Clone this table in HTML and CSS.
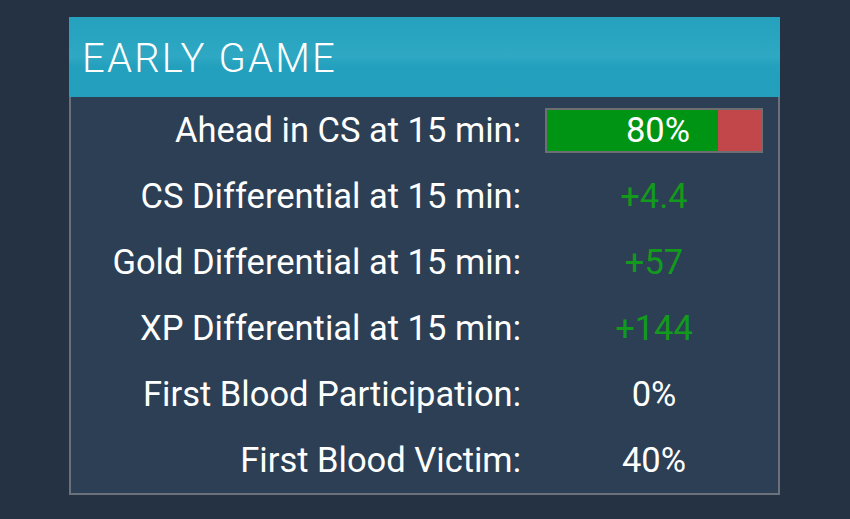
FILE: index.html
```html
<!DOCTYPE html>
<html>
<head>
<meta charset="utf-8">
<link rel="stylesheet" href="styles.css">
</head>
<body>
<div class="panel">
  <div class="panel-header">EARLY GAME</div>
  <div class="panel-body">
    <div class="row">
      <div class="label">Ahead in CS at 15 min:</div>
      <div class="value">
        <div class="bar">
          <div class="bar-win" style="width:80%"></div>
          <div class="bar-loss"></div>
          <span class="bar-text">80%</span>
        </div>
      </div>
    </div>
    <div class="row">
      <div class="label">CS Differential at 15 min:</div>
      <div class="value positive">+4.4</div>
    </div>
    <div class="row">
      <div class="label">Gold Differential at 15 min:</div>
      <div class="value positive">+57</div>
    </div>
    <div class="row">
      <div class="label">XP Differential at 15 min:</div>
      <div class="value positive">+144</div>
    </div>
    <div class="row">
      <div class="label">First Blood Participation:</div>
      <div class="value">0%</div>
    </div>
    <div class="row">
      <div class="label">First Blood Victim:</div>
      <div class="value">40%</div>
    </div>
  </div>
</div>
</body>
</html>
```

FILE: styles.css
```css
html, body {
  margin: 0;
  padding: 0;
}
body {
  background: #243244;
  width: 850px;
  height: 519px;
  overflow: hidden;
  font-family: Roboto, "Liberation Sans", sans-serif;
  color: #ffffff;
}
.panel {
  margin: 17px 0 0 69px;
  width: 711px;
}
.panel-header {
  height: 80px;
  box-sizing: border-box;
  background: linear-gradient(to bottom, #25a1be 0%, #2ea8c3 50%, #23a0bd 62%, #24a0bd 100%);
  font-weight: 300;
  font-size: 40px;
  letter-spacing: 2.2px;
  padding-left: 13px;
  line-height: 84px;
}
.panel-body {
  background: #2c3f55;
  border: 2px solid #6a717b;
  border-top: none;
}
.row {
  display: grid;
  grid-template-columns: 450px 218px;
  column-gap: 24px;
  height: 66px;
  align-items: center;
  font-size: 34.5px;
  line-height: 40px;
}
.label {
  text-align: right;
}
.value {
  text-align: center;
}
.positive {
  color: #139a1d;
}
.bar {
  position: relative;
  display: flex;
  height: 45px;
  box-sizing: border-box;
  border: 2px solid #6c6e72;
  background: #c1474b;
}
.bar-win {
  background: #009415;
}
.bar-loss {
  flex: 1;
  background: #c1474b;
}
.bar-text {
  position: absolute;
  left: 8px;
  right: 0;
  top: 0;
  bottom: 0;
  line-height: 41px;
  text-align: center;
}
```
